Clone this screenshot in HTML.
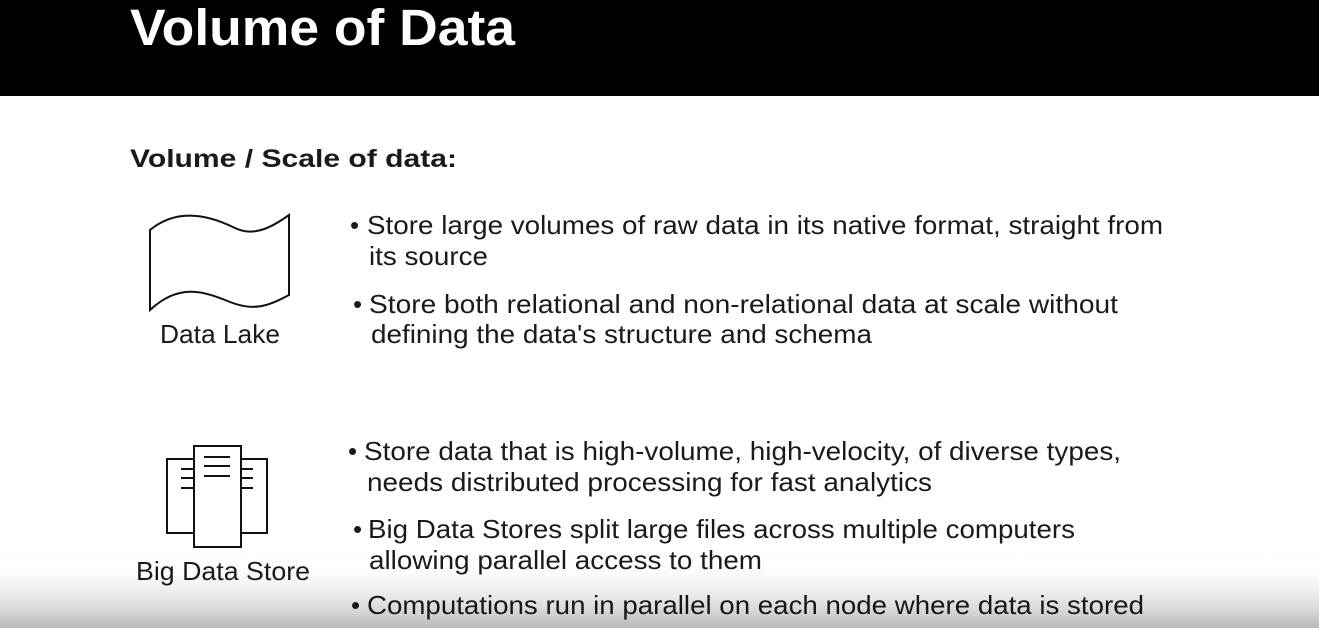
<!DOCTYPE html>
<html><head><style>
html,body{margin:0;padding:0;width:1319px;height:628px;overflow:hidden;background:#fff}
svg{display:block}
text{font-family:"Liberation Sans",sans-serif;fill:#1a1a1a;font-size:26px}
</style></head><body>
<svg width="1319" height="628" viewBox="0 0 1319 628">
<defs><linearGradient id="g" x1="0" y1="0" x2="0" y2="1">
<stop offset="0" stop-color="#fff" stop-opacity="0"/>
<stop offset="1" stop-color="#b8b8b8"/></linearGradient></defs>
<rect x="0" y="0" width="1319" height="96" fill="#000"/>
<text x="130" y="45" textLength="385" lengthAdjust="spacingAndGlyphs" style="fill:#fff;font-size:51px;font-weight:bold">Volume of Data</text>
<text x="130" y="167" textLength="327" lengthAdjust="spacingAndGlyphs" style="font-weight:bold;font-size:25px">Volume / Scale of data:</text>

<path d="M150 230 C180 205,215 218,235 228 C255 238,275 225,289 215 L289 295 C270 305,255 312,230 302 C205 292,180 282,150 310 Z" fill="none" stroke="#111" stroke-width="2"/>
<text x="160" y="343" textLength="120" lengthAdjust="spacingAndGlyphs">Data Lake</text>

<g fill="#fff" stroke="#111" stroke-width="2">
<rect x="167" y="459" width="100" height="74"/>
<rect x="194" y="446" width="47" height="101"/>
</g>
<g stroke="#111" stroke-width="2">
<path d="M204 457H230M204 466H230M204 476H230M181 469H194M181 478H194M181 488H194M241 469H253M241 478H253M241 488H253"/>
</g>
<text x="136" y="580" textLength="174" lengthAdjust="spacingAndGlyphs">Big Data Store</text>

<g>
<text x="350" y="234">•</text><text x="367" y="234" textLength="796" lengthAdjust="spacingAndGlyphs">Store large volumes of raw data in its native format, straight from</text>
<text x="369" y="265" textLength="119" lengthAdjust="spacingAndGlyphs">its source</text>
<text x="353" y="313">•</text><text x="369" y="313" textLength="749" lengthAdjust="spacingAndGlyphs">Store both relational and non-relational data at scale without</text>
<text x="371" y="343" textLength="501" lengthAdjust="spacingAndGlyphs">defining the data's structure and schema</text>
<text x="348" y="460">•</text><text x="364" y="460" textLength="757" lengthAdjust="spacingAndGlyphs">Store data that is high-volume, high-velocity, of diverse types,</text>
<text x="367" y="491" textLength="565" lengthAdjust="spacingAndGlyphs">needs distributed processing for fast analytics</text>
<text x="353" y="538">•</text><text x="368" y="538" textLength="707" lengthAdjust="spacingAndGlyphs">Big Data Stores split large files across multiple computers</text>
<text x="369" y="569" textLength="393" lengthAdjust="spacingAndGlyphs">allowing parallel access to them</text>
<text x="351" y="614">•</text><text x="367" y="614" textLength="777" lengthAdjust="spacingAndGlyphs">Computations run in parallel on each node where data is stored</text>
</g>
<rect x="0" y="555" width="1319" height="73" fill="url(#g)" style="mix-blend-mode:multiply"/>
</svg>
</body></html>
